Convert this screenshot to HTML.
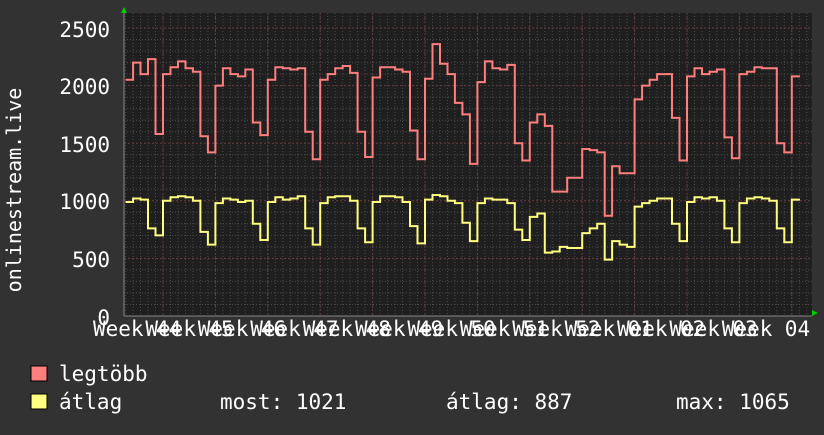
<!DOCTYPE html><html><head><meta charset="utf-8"><style>
body{margin:0;background:#323232;width:824px;height:430px;overflow:hidden}
svg text{font-family:"DejaVu Sans Mono","Liberation Mono",monospace;fill:#fff}
</style></head><body>
<svg id="s" width="824" height="430" xmlns="http://www.w3.org/2000/svg">
<rect width="824" height="430" fill="#323232"/>
<rect x="124" y="13" width="688" height="303" fill="#1f1f1f"/>
<g id="grid"></g>
<g font-size="21" text-anchor="end">
<text x="110" y="37">2500</text><text x="110" y="94">2000</text><text x="110" y="152">1500</text>
<text x="110" y="209">1000</text><text x="110" y="267">500</text><text x="110" y="325">0</text>
</g>
<text font-size="20" transform="translate(21,190) rotate(-90)" text-anchor="middle">onlinestream.live</text>
<g id="xl" font-size="21"></g>
<path id="red" fill="none" stroke="#ff7f7f" stroke-width="2"/>
<path id="yel" fill="none" stroke="#ffff7f" stroke-width="2"/>
<polygon points="121,13 127,13 124,7" fill="#0c0"/>
<polygon points="812,310 812,316 818,313" fill="#0c0"/>
<rect x="31" y="366" width="16" height="15" fill="#ff7f7f" stroke="#000"/>
<rect x="31" y="394" width="16" height="15" fill="#ffff7f" stroke="#000"/>
<g font-size="21"><text x="59" y="381">legtöbb</text>
<text x="59" y="409">átlag</text><text x="220" y="409">most: 1021</text>
<text x="446" y="409">átlag: 887</text><text x="676" y="409">max: 1065</text></g>
</svg>
<script>
var g=document.getElementById('grid'),xl=document.getElementById('xl');
function Y(v){return 316-v*0.1152}
var h='';
for(var v=100;v<=2500;v+=100){var y=Y(v).toFixed(1);var maj=v%500==0;
h+='<line x1="124" x2="812" y1="'+y+'" y2="'+y+'" stroke="'+(maj?'#6a3a3a':'#4a4a4a')+'" stroke-width="1" stroke-dasharray="'+(maj?'2,2':'1,2')+'"/>';}
var d=52.4/7;
for(var x=163-5*d;x<812;x+=d){if(x<125)continue;h+='<line x1="'+x.toFixed(1)+'" x2="'+x.toFixed(1)+'" y1="13" y2="316" stroke="#4a4a4a" stroke-dasharray="1,2"/>';}
var labs=['44','45','46','47','48','49','50','51','52','01','02','03','04'];
var xs='';
for(var i=0;i<13;i++){var x=163+i*52.4;h+='<line x1="'+x+'" x2="'+x+'" y1="13" y2="316" stroke="#6a3a3a" stroke-dasharray="2,2"/>';
var lx=93+i*52.4;
xs+='<text x="'+lx.toFixed(1)+'" y="336">Week</text><text x="'+(lx+63).toFixed(1)+'" y="336">'+labs[i]+'</text>';}
xl.innerHTML=xs;
h+='<line x1="124" x2="812" y1="316" y2="316" stroke="#888"/><line x1="124" x2="124" y1="13" y2="316" stroke="#888"/>';
g.innerHTML=h;
var R=[[2050,2200,2100,2230,1580],
[2100,2160,2210,2150,2120,1560,1420],[2000,2150,2100,2080,2140,1680,1570],[2050,2160,2150,2140,2150,1600,1360],
[2050,2100,2150,2170,2110,1600,1380],[2070,2160,2160,2140,2120,1610,1360],[2060,2360,2190,2100,1850,1750,1320],
[2030,2210,2150,2140,2180,1500,1350],[1680,1750,1650,1080,1080,1200,1200],[1450,1440,1420,870,1300,1240,1240],
[1880,2000,2050,2100,2100,1720,1350],[2080,2150,2100,2120,2140,1550,1370],[2100,2120,2160,2150,2150,1500,1420],[2080,2080]];
var Yv=[[990,1020,1010,760,700],
[1000,1030,1040,1030,1000,730,620],[980,1020,1010,990,1000,800,660],[990,1030,1010,1020,1040,760,620],
[980,1030,1040,1040,1000,760,640],[990,1040,1040,1030,990,780,630],[1010,1050,1040,1000,980,810,650],
[980,1020,1010,1010,980,750,660],[860,890,550,560,600,590,590],[720,760,800,490,650,620,600],
[950,980,1000,1020,1020,800,650],[990,1030,1020,1030,1000,760,640],[980,1020,1030,1020,1000,760,640],[1010,1010]];
function path(A){var p='',first=true;
for(var w=0;w<A.length;w++){var st=(w==0)?163-A[0].length*d:163+(w-1)*52.4;
for(var k=0;k<A[w].length;k++){var x0=Math.max(125,st+k*d),x1=Math.min(800,st+(k+1)*d),y=Y(A[w][k]).toFixed(1);
p+=(first?'M':'L')+x0.toFixed(1)+','+y+'L'+x1.toFixed(1)+','+y;first=false;}}return p;}
document.getElementById('red').setAttribute('d',path(R));
document.getElementById('yel').setAttribute('d',path(Yv));
</script></body></html>
